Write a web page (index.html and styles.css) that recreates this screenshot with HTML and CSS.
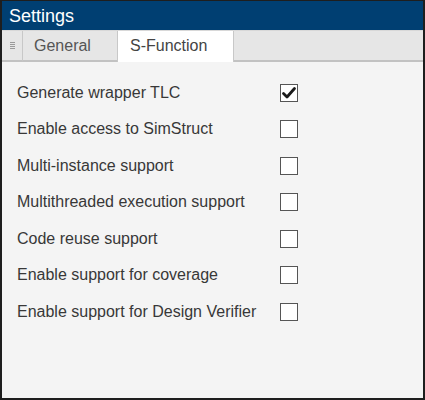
FILE: index.html
```html
<html>
<head>
<meta charset="UTF-8">
<title>Settings</title>
<link rel="stylesheet" href="styles.css">
</head>
<body>
<div class="panel">
  <div class="titleBar">Settings</div>

  <div class="tabBar">
    <div class="grip"><span></span><span></span><span></span><span></span></div>
    <div class="tab">General</div>
    <div class="tab active">S-Function</div>
    <div class="tabFill"></div>
  </div>

  <div class="options">
    <label class="option"><span>Generate wrapper TLC</span><span class="box checked">
      <svg width="16" height="16" viewBox="0 0 16 16"><path d="M2.5 8.5 L6 12 L13.5 3.5" fill="none" stroke="#1a1a1a" stroke-width="2.8" stroke-linecap="round" stroke-linejoin="round"/></svg>
    </span></label>
    <label class="option"><span>Enable access to SimStruct</span><span class="box"></span></label>
    <label class="option"><span>Multi-instance support</span><span class="box"></span></label>
    <label class="option"><span>Multithreaded execution support</span><span class="box"></span></label>
    <label class="option"><span>Code reuse support</span><span class="box"></span></label>
    <label class="option"><span>Enable support for coverage</span><span class="box"></span></label>
    <label class="option"><span>Enable support for Design Verifier</span><span class="box"></span></label>
  </div>
</div>
</body>
</html>
```
FILE: styles.css
```css
html, body { margin: 0; padding: 0; }
body { font-family: Arial, "Liberation Sans", Helvetica, sans-serif; background: #f4f4f4; }

.panel { box-sizing: border-box; width: 425px; height: 400px;
         border: solid #1e1e1e 1px; border-width: 1px 2px 2px 2px;
         background: #f4f4f4; display: flex; flex-direction: column; }

.titleBar { height: 29px; background: #003f72; color: #ffffff;
            font-size: 18px; line-height: 30px; padding-left: 7px; }

.tabBar { display: flex; height: 31px; background: #e6e6e6; border-top: solid #d8d8d8 1px; }
.grip { width: 20px; display: flex; flex-direction: column; justify-content: center; align-items: center; gap: 1px;
        border-bottom: solid #c2c2c2 2px; box-sizing: border-box; }
.grip span { width: 5px; height: 1px; background: #9a9a9a; }
.tab { font-size: 16px; color: #555555; padding: 6px 0 0 11px; box-sizing: border-box;
       border-left: solid #c8c8c8 1px; border-bottom: solid #c2c2c2 2px; width: 95px; }
.tab.active { background: #ffffff; color: #444444; border-bottom: none; width: 117px; padding-left: 12px;
              border-right: solid #c8c8c8 1px; }
.tabFill { flex: 1; border-bottom: solid #c2c2c2 2px; }

.options { display: flex; flex-direction: column; padding: 20px 0 0 15px; gap: 15px; }
.option { display: flex; align-items: center; height: 21.5px; font-size: 16px; color: #383838; }
.option span:first-child { width: 263px; }
.box { box-sizing: border-box; width: 18px; height: 18px; border: solid #555555 1px; background: #ffffff;
       display: flex; align-items: center; justify-content: center; }
```
